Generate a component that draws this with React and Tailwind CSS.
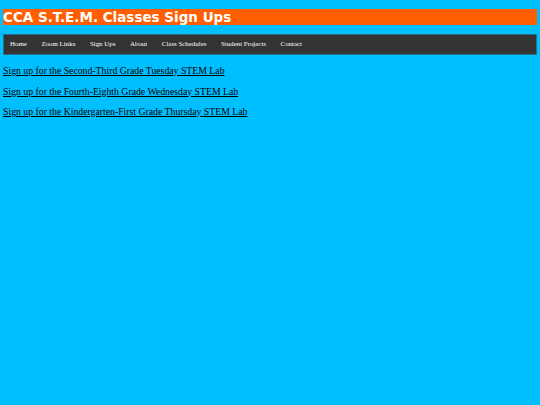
import React from "react";

const navItems = ["Home", "Zoom Links", "Sign Ups", "About", "Class Schedules", "Student Projects", "Contact"];

const labs = [
  "Sign up for the Second-Third Grade Tuesday STEM Lab",
  "Sign up for the Fourth-Eighth Grade Wednesday STEM Lab",
  "Sign up for the Kindergarten-First Grade Thursday STEM Lab",
];

export default function App() {
  return (
    <div className="min-h-[405px] w-[540px] bg-[#00bfff] px-[3px] pt-[9px]">
      <h1
        className="h-4 bg-[#ff5f00] text-[13.5px] font-bold leading-4 text-white"
        style={{ fontFamily: '"DejaVu Sans", Verdana, sans-serif' }}
      >
        CCA S.T.E.M. Classes Sign Ups
      </h1>
      <nav
        className="mt-[9px] flex h-[21px] items-center border border-[#2a6f86] bg-[#333333] pl-[6px] text-[6.9px] text-white"
        style={{ fontFamily: '"Liberation Serif", "Times New Roman", serif' }}
      >
        {navItems.map((item) => (
          <a key={item} href="#" className="mr-[14.6px]">
            {item}
          </a>
        ))}
      </nav>
      <div
        className="mt-[9px] flex flex-col gap-[7.5px] text-[9.75px] leading-[13px] text-black"
        style={{ fontFamily: '"Liberation Serif", "Times New Roman", serif' }}
      >
        {labs.map((lab) => (
          <a key={lab} href="#" className="underline">
            {lab}
          </a>
        ))}
      </div>
    </div>
  );
}
